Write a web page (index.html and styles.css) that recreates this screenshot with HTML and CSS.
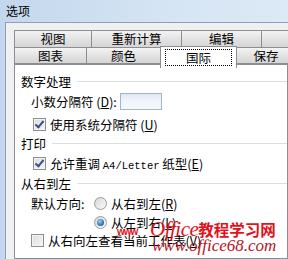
FILE: index.html
```html
<!DOCTYPE html>
<html lang="zh-CN">
<head>
    <meta charset="UTF-8">
    <title>选项</title>
    <link rel="stylesheet" href="styles.css">
</head>
<body>
    <div class="window">
        <!-- Title bar -->
        <div class="titlebar">选项</div>

        <div class="client">
            <!-- Tabs, two rows -->
            <div class="tabs">
                <div class="tab-row">
                    <div class="tab t-view">视图</div>
                    <div class="tab t-calc">重新计算</div>
                    <div class="tab t-edit">编辑</div>
                    <div class="tab t-general">常规</div>
                </div>
                <div class="tab-row">
                    <div class="tab t-chart">图表</div>
                    <div class="tab t-color">颜色</div>
                    <div class="tab t-intl active"><span class="focus">国际</span></div>
                    <div class="tab t-save">保存</div>
                </div>
            </div>

            <!-- Tab page -->
            <div class="page">
                <div class="group g1"><span>数字处理</span><i></i></div>
                <div class="row r-input">
                    <span>小数分隔符 (<u>D</u>):</span>
                    <div class="textbox"></div>
                </div>
                <div class="row r-check1">
                    <span class="check on"></span>
                    <span>使用系统分隔符 (<u>U</u>)</span>
                </div>

                <div class="group g2"><span>打印</span><i></i></div>
                <div class="row r-check2">
                    <span class="check on"></span>
                    <span>允许重调 <span class="mono">A4/Letter</span> 纸型(<u>E</u>)</span>
                </div>

                <div class="group g3"><span>从右到左</span><i></i></div>
                <div class="row r-dir">
                    <span class="dir-label">默认方向:</span>
                    <span class="radio"></span>
                    <span>从右到左(<u>R</u>)</span>
                </div>
                <div class="row r-radio2">
                    <span class="radio on"></span>
                    <span>从左到右(<u>L</u>)</span>
                </div>
                <div class="row r-check3">
                    <span class="check"></span>
                    <span>从右向左查看当前工作表(<u>V</u>)</span>
                </div>
            </div>
        </div>

        <!-- Watermark over the dialog -->
        <div class="watermark">
            <span class="wm-www">www</span>
            <span class="wm-title"><em>Office</em>教程学习网</span>
            <span class="wm-url">www.office68.com</span>
        </div>
    </div>
</body>
</html>
```

FILE: styles.css
```css
/* Page */
body {
    margin: 0;
    width: 288px;
    height: 259px;
    overflow: hidden;
    font-family: "Noto Sans CJK SC", "Microsoft YaHei", sans-serif;
    font-size: 12.5px;
    color: #000;
}

.window {
    position: relative;
    width: 288px;
    height: 259px;
    display: flex;
    flex-direction: column;
    background: linear-gradient(to right, #c3d7ed, #d6e5f4 60%, #dce9f6);
}

/* Title bar */
.titlebar {
    height: 22px;
    line-height: 22px;
    padding-left: 6px;
    font-size: 12px;
    flex: none;
}

.client {
    flex: 1;
    margin-left: 5px;
    border-left: 1px solid #8fa1b6;
    border-top: 1px solid #8fa1b6;
    background: #f0f0f0;
    padding: 7px 0 0 8px;
    display: flex;
    flex-direction: column;
    overflow: hidden;
}

/* Tabs */
.tabs {
    display: flex;
    flex-direction: column;
    flex: none;
}

.tab-row {
    display: flex;
    height: 17px;
}

.tab {
    flex: none;
    height: 17px;
    box-sizing: border-box;
    border: 1px solid #8c8e94;
    margin-left: -1px;
    background: linear-gradient(#f4f4f4, #e3e3e3 50%, #d6d6d6);
    text-align: center;
    line-height: 15px;
    white-space: nowrap;
    overflow: hidden;
}

.tab:first-child {
    margin-left: 0;
}

.tab-row:first-child .tab {
    height: 18px;
}

.t-view { width: 78px; }
.t-calc { width: 91px; }
.t-edit { width: 81px; }
.t-general { width: 60px; text-align: left; padding-left: 26px; }
.t-chart { width: 73px; }
.t-color { width: 75px; }
.t-save { width: 60px; }

.tab.active {
    width: 77px;
    height: 22px;
    margin-top: -1px;
    margin-bottom: -4px;
    background: #fff;
    border-bottom: none;
    position: relative;
    z-index: 2;
    padding: 2px 4px 0;
    line-height: 15px;
}

.focus {
    display: block;
    height: 17px;
    line-height: 16px;
    border: 1px dotted #000;
    box-sizing: border-box;
}

/* Tab page */
.page {
    flex: 1;
    background: #fff;
    border: 1px solid #8c8e94;
    padding: 7px 0 0 6px;
    position: relative;
    z-index: 1;
}

.group {
    display: flex;
    align-items: center;
    height: 19px;
}

.group i {
    flex: 1;
    height: 0;
    border-top: 1px solid #dadfe3;
    margin-left: 6px;
}

.g2 { height: 19px; }
.g3 { height: 20px; }

.row {
    display: flex;
    align-items: center;
    padding-left: 10px;
    white-space: nowrap;
}

.r-input { height: 20px; }
.r-check1 { height: 20px; margin-top: 3px; padding-left: 12px; }
.r-check2 { height: 20px; padding-left: 12px; }
.r-dir { height: 20px; }
.r-radio2 { height: 18px; padding-left: 73px; }
.r-check3 { height: 18px; }

.textbox {
    width: 40px;
    height: 15px;
    margin-left: 3px;
    border: 1px solid #9fb4cf;
    background: linear-gradient(#dfe8f3, #edf3fa 40%, #f6f9fc);
}

.mono {
    font-family: "Liberation Mono", monospace;
    font-size: 10.5px;
}

/* Check boxes and radio buttons */
.check {
    width: 11px;
    height: 11px;
    margin-right: 4px;
    border: 1px solid #8e8f8f;
    background: linear-gradient(135deg, #dcdcdc, #f6f6f6);
    box-shadow: inset 0 0 0 1px #f4f4f4;
    position: relative;
}

.check.on::after {
    content: "";
    position: absolute;
    left: 3px;
    top: 0;
    width: 3px;
    height: 7px;
    border: solid #3a4f8c;
    border-width: 0 2px 2px 0;
    transform: rotate(40deg);
}

.dir-label {
    width: 63px;
}

.radio {
    width: 11px;
    height: 11px;
    border-radius: 50%;
    border: 1px solid #9a9a9a;
    background: linear-gradient(135deg, #d8d8d8, #fafafa);
    margin-right: 4px;
    position: relative;
}

.radio.on::after {
    content: "";
    position: absolute;
    left: 2px;
    top: 2px;
    width: 7px;
    height: 7px;
    border-radius: 50%;
    background: radial-gradient(circle at 40% 35%, #9fd2f1, #1a6aa4 70%, #123f6b);
}

/* Watermark */
.watermark {
    position: absolute;
    left: 0;
    top: 0;
    width: 288px;
    height: 259px;
    z-index: 5;
    pointer-events: none;
    color: #e0121c;
    white-space: nowrap;
}

.wm-www {
    position: absolute;
    left: 117px;
    top: 226px;
    font-family: "Liberation Sans", sans-serif;
    font-weight: bold;
    font-size: 10px;
    letter-spacing: -1px;
}

.wm-title {
    position: absolute;
    left: 150px;
    top: 219px;
    font-size: 15.5px;
    font-weight: bold;
    line-height: 20px;
}

.wm-title em {
    font-family: "Liberation Serif", serif;
    font-weight: normal;
    font-size: 21px;
    letter-spacing: -0.5px;
}

.wm-url {
    position: absolute;
    left: 152px;
    top: 237px;
    font-family: "Liberation Serif", serif;
    font-style: italic;
    font-size: 17px;
    line-height: 18px;
    color: #b8141e;
}
```
